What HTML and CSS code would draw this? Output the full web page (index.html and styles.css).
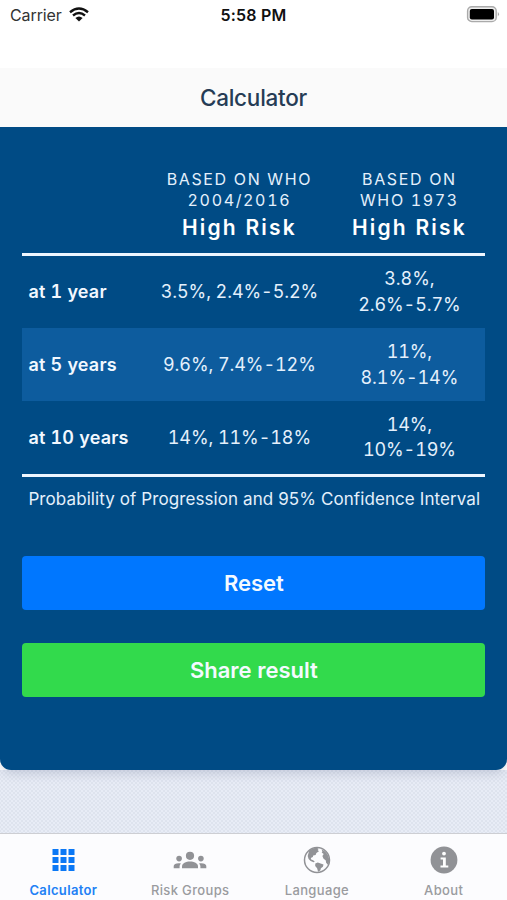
FILE: index.html
```html
<!DOCTYPE html>
<html lang="en">
  <head>
    <title>Calculator</title>
    <meta charset="utf-8" />
    <meta name="viewport" content="width=device-width, initial-scale=1" />
    <link rel="stylesheet" href="styles.css">
  </head>
  <body>
    <div class="status-bar">
      <div class="carrier">
        <span>Carrier</span>
        <svg class="wifi" viewBox="0 0 20 15">
          <path d="M1 5.2Q10-2.2 19 5.2" />
          <path d="M4 8.5Q10 3.6 16 8.5" />
          <path class="dot" d="M6.4 11Q10 8 13.6 11L10 14.6Z" />
        </svg>
      </div>
      <div class="time">5:58 PM</div>
      <div class="battery-area">
        <svg class="battery" viewBox="0 0 34 17">
          <rect x="1.6" y="0.8" width="28.6" height="14.8" rx="4.2" fill="#eee" stroke="#aaa" stroke-width="1.4" />
          <rect x="3.8" y="3" width="24.2" height="10.4" rx="2" />
          <path d="M31.8 6q2.4 2.2 0 4.4z" fill="#aaa" />
        </svg>
      </div>
    </div>
    <header>
      <h1>Calculator</h1>
    </header>
    <main>
      <section class="card">
        <table>
          <thead>
            <tr>
              <th class="period"></th>
              <th class="who-2016">
                <div class="based-on">Based on WHO<br />2004/2016</div>
                <div class="risk">High Risk</div>
              </th>
              <th class="who-1973">
                <div class="based-on">Based on<br />WHO 1973</div>
                <div class="risk">High Risk</div>
              </th>
            </tr>
          </thead>
          <tbody>
            <tr>
              <th>at 1 year</th>
              <td>3.5%, 2.4%-5.2%</td>
              <td>3.8%,<br />2.6%-5.7%</td>
            </tr>
            <tr>
              <th>at 5 years</th>
              <td>9.6%, 7.4%-12%</td>
              <td>11%,<br />8.1%-14%</td>
            </tr>
            <tr>
              <th>at 10 years</th>
              <td>14%, 11%-18%</td>
              <td>14%,<br />10%-19%</td>
            </tr>
          </tbody>
        </table>
        <p class="note">Probability of Progression and 95% Confidence Interval</p>
        <button class="button reset">Reset</button>
        <button class="button share">Share result</button>
      </section>
    </main>
    <nav class="tabs">
      <a class="tab active">
        <svg viewBox="0 0 28 28">
          <path d="M3.5 3h6v6h-6zM11.5 3h6v6h-6zM19.5 3h6v6h-6zM3.5 11h6v6h-6zM11.5 11h6v6h-6zM19.5 11h6v6h-6zM3.5 19h6v6h-6zM11.5 19h6v6h-6zM19.5 19h6v6h-6z" />
        </svg>
        <span>Calculator</span>
      </a>
      <a class="tab">
        <svg class="wide" viewBox="0 0 34 28">
          <circle cx="17" cy="9.8" r="4.1" />
          <circle cx="6.1" cy="12.6" r="2.8" />
          <circle cx="27.9" cy="12.6" r="2.8" />
          <path d="M9 22.3v-1.8c0-3 4-4.9 8-4.9s8 1.9 8 4.9v1.8z" />
          <path d="M.7 22.3V20c0-2.1 3.3-3.4 7.3-2.6-1 1-1.4 2-1.4 3.2v1.7z" />
          <path d="M33.3 22.3V20c0-2.1-3.3-3.4-7.3-2.6 1 1 1.4 2 1.4 3.2v1.7z" />
        </svg>
        <span>Risk Groups</span>
      </a>
      <a class="tab">
        <svg viewBox="0 0 28 28">
          <circle class="ring" cx="14" cy="14" r="12.5" />
          <path d="M6.2 4.6C8.4 2.8 11 1.8 14 1.7l1.6 1.2-1 1.2 1.4 1.2-2.6 1.6-.8 2.2-2.4.4-.4 1.6-2 .8.4 1.6 2 .8 1.6 1.4-1.2.6-3-1.2-2-2.2-.9-3z" />
          <path d="M12.3 17.4l2.5-.9 2.8 1.1 2.9.8-.6 2.3-2 1.5-.6 2.2-2.2 1.4-1-3.6-1.9-2.3z" />
          <path d="M18.4 3.2c4 1.6 6.8 5 7.6 9.2.3 2.4 0 4.6-.9 6.6l-2-2.2-.3-2.4-2.4-1.8-1-2.6 1.3-2-2-1.4.7-1.4z" />
        </svg>
        <span>Language</span>
      </a>
      <a class="tab">
        <svg viewBox="0 0 28 28">
          <circle cx="14" cy="14" r="13.4" />
          <circle class="cutout" cx="14" cy="7.6" r="1.9" />
          <path class="cutout" d="M10.6 11.4h5.2v8.1h2.5v2h-7.8v-2H13v-6.1h-2.4z" />
        </svg>
        <span>About</span>
      </a>
    </nav>
  </body>
</html>
```
FILE: styles.css
```css
* {
  box-sizing: border-box;
}

body {
  font-family: Inter, "Liberation Sans", sans-serif;
  margin: 0;
  height: 100vh;
  display: flex;
  flex-direction: column;
  overflow: hidden;
  background: #fff;
}

.status-bar {
  height: 68px;
  padding: 5px 7px 0 10px;
  display: grid;
  grid-template-columns: 1fr auto 1fr;
  align-items: start;
  font-size: 16px;
  line-height: 20px;
  color: #111;
}

.carrier {
  display: flex;
  gap: 7px;
  color: #333;
  letter-spacing: -0.1px;
}

.wifi {
  width: 20px;
  height: 15px;
  margin-top: 2px;
  fill: none;
  stroke: #111;
  stroke-width: 2.4;
}

.wifi .dot {
  fill: #111;
  stroke: none;
}

.time {
  margin-left: -3px;
  font-weight: 600;
  letter-spacing: 0.2px;
}

.battery-area {
  text-align: right;
}

.battery {
  width: 34px;
  height: 17px;
  display: inline-block;
  vertical-align: top;
  margin-top: 1px;
}

header {
  position: relative;
  z-index: 1;
  height: 59px;
  display: flex;
  align-items: center;
  justify-content: center;
  background: #fafafa;
}

h1 {
  margin: 0;
  font-size: 22.5px;
  font-weight: 500;
  letter-spacing: -0.25px;
  color: #263c55;
}

main {
  flex: 1;
  background-color: #e8ecf6;
  background-image: linear-gradient(#fff, #fff),
    radial-gradient(#dde2ed 0.7px, transparent 1.1px),
    radial-gradient(#dde2ed 0.7px, transparent 1.1px);
  background-size: 100% 643px, 4px 4px, 4px 4px;
  background-position: 0 0, 0 0, 2px 2px;
  background-repeat: no-repeat, repeat, repeat;
}

.card {
  height: 643px;
  padding: 41px 22px 0 22.4px;
  color: #e4f0fc;
  background: #004b85;
  border-radius: 0 0 11px 11px;
  box-shadow: 0 4px 12px -2px rgba(40, 60, 100, 0.22);
}

table {
  width: 463px;
  table-layout: fixed;
  border-collapse: collapse;
  font-size: 18px;
  line-height: 25.5px;
  font-feature-settings: "tnum";
}

thead tr {
  height: 86px;
  border-bottom: 3px solid #eef6ff;
}

thead th {
  padding: 0 0 9px;
  vertical-align: bottom;
}

.period {
  width: 123px;
}

.who-2016 {
  width: 188px;
}

.based-on {
  font-size: 16px;
  font-weight: 400;
  line-height: 21.5px;
  letter-spacing: 1.65px;
  text-transform: uppercase;
}

.risk {
  font-size: 21px;
  font-weight: 600;
  line-height: 32px;
  letter-spacing: 2.15px;
  color: #fff;
}

tbody tr {
  height: 73px;
}

tbody tr:first-child,
tbody tr:last-child {
  height: 74px;
}

tbody tr:nth-child(even) {
  background: #0d5c9e;
}

tbody tr:last-child {
  border-bottom: 3px solid #eef6ff;
}

tbody th {
  padding: 0 6px;
  text-align: left;
  font-weight: 600;
  letter-spacing: 0.2px;
  color: #f2f8ff;
}

tbody td {
  padding: 0;
  text-align: center;
  letter-spacing: -0.1px;
}

.note {
  margin: 10px 0 44px 6px;
  font-size: 17px;
  line-height: 25px;
  letter-spacing: 0.09px;
  white-space: nowrap;
}

.button {
  display: block;
  width: 463px;
  height: 54px;
  margin: 0 0 33px;
  border: 0;
  border-radius: 4px;
  font: 600 22px Inter, sans-serif;
  color: #f4faff;
}

.reset {
  background: #0077ff;
}

.share {
  background: #32da4c;
}

.tabs {
  height: 67px;
  display: grid;
  grid-template-columns: repeat(4, 1fr);
  background: #fcfcfe;
  border-top: 1px solid #cdced3;
}

.tab {
  display: flex;
  flex-direction: column;
  align-items: center;
  padding-top: 12px;
  font-size: 13px;
  font-weight: 500;
  line-height: 18px;
  letter-spacing: 0.35px;
  color: #9a9b9f;
}

.tab svg {
  width: 28px;
  height: 28px;
  margin-bottom: 7px;
  fill: #919296;
}

.tab .wide {
  width: 34px;
}

.tab.active {
  color: #2180f5;
  font-weight: 600;
}

.tab.active svg {
  fill: #0b78f5;
}

.tab .ring {
  fill: none;
  stroke: #919296;
  stroke-width: 1.5;
}

.tab .cutout {
  fill: #fff;
}
```
